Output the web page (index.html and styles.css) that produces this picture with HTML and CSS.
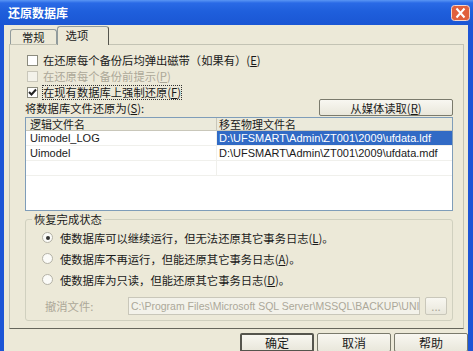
FILE: index.html
```html
<!DOCTYPE html>
<html lang="zh-CN">
<head>
    <meta charset="UTF-8">
    <title>还原数据库</title>
    <link rel="stylesheet" href="styles.css">
</head>
<body>
    <div class="window">
        <div class="titlebar">
            <span class="title">还原数据库</span>
            <span class="close">
                <svg width="19" height="16" viewBox="0 0 19 16">
                    <rect x="0.5" y="0.5" width="18" height="15" rx="3" fill="#e0603c" stroke="#f4d6cc"/>
                    <path d="M5.5 3.5 L13.5 12.5 M13.5 3.5 L5.5 12.5" stroke="#fff" stroke-width="2"/>
                </svg>
            </span>
        </div>
        <div class="client">
            <div class="tabs">
                <div class="tab">常规</div>
                <div class="tab active">选项</div>
            </div>
            <div class="panel">
                <div class="check">
                    <span class="box"></span>
                    <span>在还原每个备份后均弹出磁带（如果有）(<u>E</u>)</span>
                </div>
                <div class="check disabled">
                    <span class="box"></span>
                    <span>在还原每个备份前提示(<u>P</u>)</span>
                </div>
                <div class="check">
                    <span class="box checked">
                        <svg width="9" height="9" viewBox="0 0 9 9"><path d="M1 4 L3.5 6.5 L8 1.5" stroke="#222" stroke-width="2" fill="none"/></svg>
                    </span>
                    <span class="focus">在现有数据库上强制还原(<u>F</u>)</span>
                </div>
                <div class="list-bar">
                    <span>将数据库文件还原为(<u>S</u>):</span>
                    <span class="btn wide">从媒体读取(<u>R</u>)</span>
                </div>
                <div class="list">
                    <div class="list-head">
                        <span class="col1">逻辑文件名</span>
                        <span class="col2">移至物理文件名</span>
                    </div>
                    <div class="list-row">
                        <span class="col1">Uimodel_LOG</span>
                        <span class="col2 selected">D:\UFSMART\Admin\ZT001\2009\ufdata.ldf</span>
                    </div>
                    <div class="list-row">
                        <span class="col1">Uimodel</span>
                        <span class="col2">D:\UFSMART\Admin\ZT001\2009\ufdata.mdf</span>
                    </div>
                    <div class="list-row">
                        <span class="col1"></span>
                        <span class="col2"></span>
                    </div>
                </div>
                <fieldset class="group">
                    <legend>恢复完成状态</legend>
                    <div class="radio">
                        <span class="dot on"></span>
                        <span>使数据库可以继续运行，但无法还原其它事务日志(<u>L</u>)。</span>
                    </div>
                    <div class="radio">
                        <span class="dot"></span>
                        <span>使数据库不再运行，但能还原其它事务日志(<u>A</u>)。</span>
                    </div>
                    <div class="radio">
                        <span class="dot"></span>
                        <span>使数据库为只读，但能还原其它事务日志(<u>D</u>)。</span>
                    </div>
                    <div class="undo">
                        <span class="undo-label">撤消文件:</span>
                        <span class="textbox">C:\Program Files\Microsoft SQL Server\MSSQL\BACKUP\UNI</span>
                        <span class="btn small">...</span>
                    </div>
                </fieldset>
            </div>
            <div class="footer">
                <span class="btn default">确定</span>
                <span class="btn">取消</span>
                <span class="btn">帮助</span>
            </div>
        </div>
    </div>
</body>
</html>
```

FILE: styles.css
```css
* {
    box-sizing: border-box;
    margin: 0;
    padding: 0;
}

body {
    font-family: 'Noto Sans CJK SC', sans-serif;
    font-size: 11.3px;
    color: #1a1a1a;
    background-color: #ece9d8;
}

.window {
    width: 473px;
    height: 351px;
    overflow: hidden;
    display: flex;
    flex-direction: column;
    background-color: #ece9d8;
}

.titlebar {
    height: 25px;
    flex: none;
    display: flex;
    align-items: center;
    padding: 0 3px 0 8px;
    background: linear-gradient(#5a96f4 0, #2a6ae6 3px, #1f5fdc 45%, #1a56d4 100%);
}

.title {
    color: white;
    font-weight: bold;
    font-size: 12px;
}

.close {
    margin-left: auto;
    height: 16px;
    display: flex;
}

.client {
    flex: 1;
    display: flex;
    flex-direction: column;
    border-left: 4px solid #1c55d6;
    border-right: 5px solid #1c55d6;
    min-height: 0;
}

.tabs {
    height: 19px;
    flex: none;
    display: flex;
    align-items: flex-end;
    padding-left: 6px;
}

.tab {
    height: 15px;
    line-height: 14px;
    padding: 0 11px;
    border: 1px solid #919b9c;
    border-bottom: none;
    border-radius: 3px 3px 0 0;
    background-color: #ece9d8;
}

.tab.active {
    height: 19px;
    line-height: 16px;
    width: 52px;
    padding: 0 0 0 8px;
    margin-bottom: -1px;
    position: relative;
    z-index: 1;
    border-right: 1px solid #55554d;
}

.panel {
    flex: none;
    height: 285px;
    margin: 0 4px 0 5px;
    border: 1px solid #c3c3b4;
    border-bottom-color: #66665c;
    padding: 7px 10px 0 15px;
}

.check {
    height: 16px;
    display: flex;
    align-items: center;
    gap: 5px;
    margin-left: 2px;
}

.box {
    width: 11px;
    height: 11px;
    border: 1px solid #8b8b7e;
    background-color: white;
    display: flex;
    align-items: center;
    justify-content: center;
}

.check.disabled {
    color: #aca899;
}

.check.disabled .box {
    border-color: #c9c7ba;
    background-color: #f3f2ea;
}

.focus {
    outline: 1px dotted #333;
    line-height: 13px;
}

.list-bar {
    height: 17px;
    margin-top: -1px;
    display: flex;
    align-items: center;
    justify-content: space-between;
}

.btn {
    display: flex;
    align-items: center;
    justify-content: center;
    border: 1px solid #7a7a6c;
    border-radius: 2px;
    background: linear-gradient(#f8f7f1, #e9e7db);
}

.btn.wide {
    width: 134px;
    height: 17px;
}

.list {
    margin-top: 1px;
    height: 94px;
    border: 1px solid #7f9db9;
    background-color: white;
    font-family: 'Liberation Sans', sans-serif;
    font-size: 11px;
}

.list-head {
    height: 13px;
    display: flex;
    background-color: #ebeadb;
    border-bottom: 1px solid #c9c7ba;
    font-family: 'Noto Sans CJK SC', sans-serif;
    line-height: 12px;
}

.list-head .col1 {
    border-right: 1px solid #c9c7ba;
}

.list-row {
    height: 15px;
    display: flex;
    line-height: 14px;
    border-bottom: 1px solid #f0f0ec;
}

.col1 {
    width: 191px;
    padding-left: 4px;
    flex: none;
    border-right: 1px solid #f0f0ec;
}

.col2 {
    flex: 1;
    padding-left: 2px;
    white-space: nowrap;
}

.selected {
    background-color: #316ac5;
    color: white;
}

.group {
    margin-top: 2px;
    border: 1px solid #d0d0bf;
    border-radius: 3px;
    padding: 0 0 5px 16px;
}

.group legend {
    margin-left: -10px;
    padding: 0 2px;
    line-height: 13px;
}

.radio {
    height: 21px;
    display: flex;
    align-items: center;
    gap: 7px;
}

.radio:first-of-type {
    margin-top: 1px;
}

.dot {
    width: 11px;
    height: 11px;
    border: 1px solid #b4b2a6;
    border-radius: 50%;
    background-color: #fbfbf8;
    display: flex;
    align-items: center;
    justify-content: center;
}

.dot.on::after {
    content: '';
    width: 4px;
    height: 4px;
    border-radius: 50%;
    background-color: #333;
}

.undo {
    margin-top: 7px;
    height: 18px;
    display: flex;
    align-items: center;
    color: #aca899;
}

.undo-label {
    width: 86px;
    padding-left: 3px;
    flex: none;
}

.textbox {
    width: 292px;
    height: 18px;
    border: 1px solid #c9c7ba;
    background-color: #f3f2ea;
    font-family: 'Liberation Sans', sans-serif;
    font-size: 10.5px;
    line-height: 16px;
    padding-left: 2px;
    white-space: nowrap;
    overflow: hidden;
}

.btn.small {
    width: 22px;
    height: 18px;
    margin-left: 5px;
    border-color: #c9c7ba;
    color: #aca899;
}

.footer {
    flex: 1;
    display: flex;
    justify-content: flex-end;
    gap: 3px;
    padding-top: 4px;
}

.footer .btn {
    width: 74px;
    height: 19px;
    font-size: 12px;
}

.btn.default {
    border: 2px solid #55554d;
}
```
